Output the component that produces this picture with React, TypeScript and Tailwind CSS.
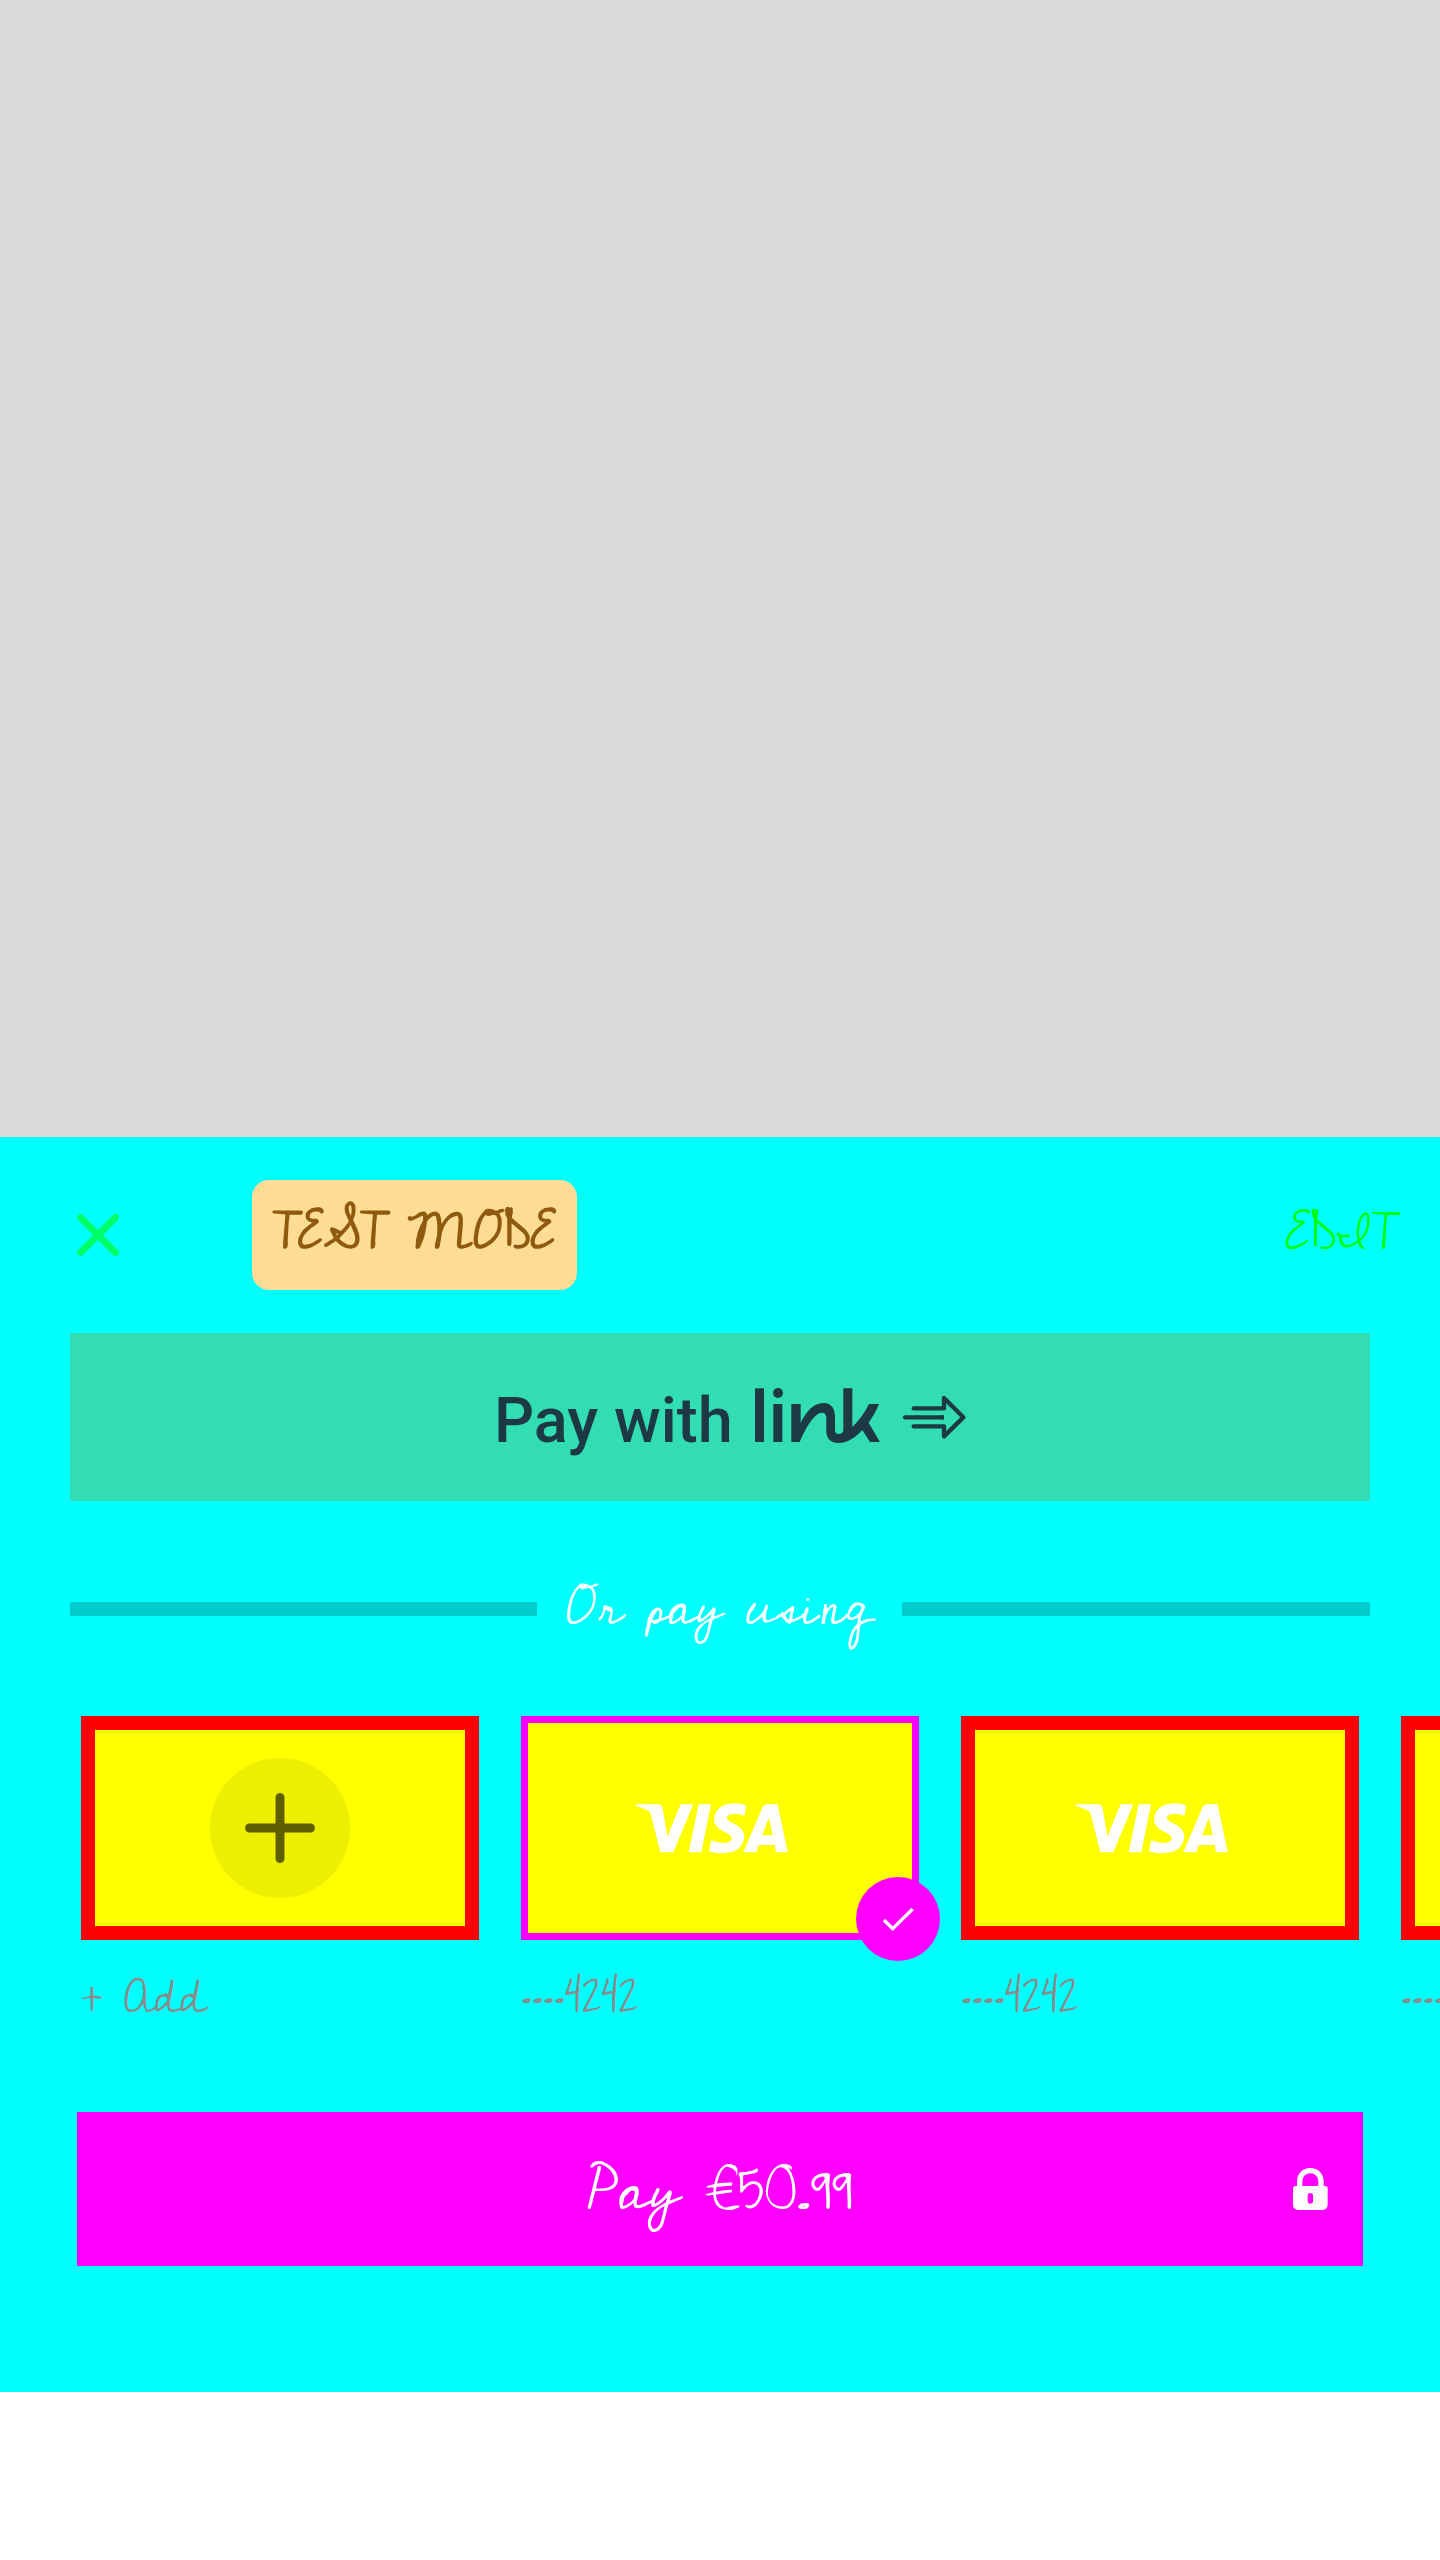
function CloseIcon() {
  return (
    <svg className="ml-[77px] h-[42px] w-[42px] shrink-0" viewBox="0 0 42 42" fill="none" stroke="#00ff66" strokeWidth="7" strokeLinecap="round">
      <path d="M3.5 3.5 38.5 38.5M38.5 3.5 3.5 38.5" />
    </svg>
  );
}

function LinkLogo() {
  return (
    <svg className="mb-[2px] h-[64px] w-[136px] shrink-0" viewBox="0 0 408 192" fill="#1d3944" role="img" aria-label="link">
      <path d="M15 13H42V174H15Z" />
      <circle cx="84" cy="27" r="15" />
      <path d="M70 60H97V174H70Z" />
      <path d="M124 60H152V116C170 82 190 57 220 57C246 57 255 76 255 99V138C255 147 260 150 266 150C274 150 280 146 280 138V13H307V129C325 111 344 87 357 60H387C379 80 368 99 356 116L390 174H360L337 138C316 161 292 177 266 177C241 177 229 162 229 140V103C229 92 225 86 216 86C196 86 171 122 149 174H124Z" />
    </svg>
  );
}

function LinkArrow() {
  return (
    <svg className="mt-[2px] ml-[10px] h-[60px] w-[76px] shrink-0" viewBox="0 0 228 180" fill="none" stroke="#1d3944" strokeWidth="13" strokeLinecap="round" strokeLinejoin="round">
      <path d="M53 61H144V30L202 88L144 145V115H53" />
      <path d="M27 88H138" />
      <path d="M134 88H144" strokeLinecap="butt" />
    </svg>
  );
}

function VisaLogo() {
  return (
    <svg className="h-[51px] w-[153px]" viewBox="376 308 459 153" fill="#fff" role="img" aria-label="Visa">
      <path d="M379 312H446Q457 313 459 324L473 409L513 312H551L491 456H452L423 340Q421 333 412 329Q395 321 379 317Z" />
      <path d="M567 312H604L575 456H537Z" />
      <path d="M710 316L704 346Q690 340 675 340Q652 341 652 352Q652 360 667 367Q704 383 704 408Q700 457 640 459Q615 459 598 452L605 419Q622 428 645 428Q666 427 666 413Q665 404 645 395Q613 381 613 357Q618 311 675 309Q694 309 710 316Z" />
      <path fillRule="evenodd" d="M772 312H804L834 456H799L795 434H747L740 456H701L759 320Q763 312 772 312ZM778 352L757 405H789Z" />
    </svg>
  );
}

function PlusBadge() {
  return (
    <div className="flex h-[140px] w-[140px] items-center justify-center rounded-full bg-[#eeee00]">
      <svg className="h-[70px] w-[70px]" viewBox="0 0 70 70" fill="none" stroke="#5f5f00" strokeWidth="9" strokeLinecap="round">
        <path d="M35 4.5V65.5M4.5 35H65.5" />
      </svg>
    </div>
  );
}

function SelectedBadge() {
  return (
    <div className="absolute -right-[28px] -bottom-[28px] flex h-[84px] w-[84px] items-center justify-center rounded-full bg-[#ff00ff]">
      <svg className="h-[84px] w-[84px]" viewBox="0 0 252 252" fill="none" stroke="#fff" strokeWidth="10">
        <path d="M84 129L110 155L170 96" />
      </svg>
    </div>
  );
}

function LockIcon() {
  return (
    <svg className="absolute right-[35px] h-[42px] w-[35px]" viewBox="0 0 105 126" fill="none">
      <path d="M20 60V40C20 21 34 8 52 8C70 8 84 21 84 40V60" stroke="#fff" strokeWidth="16" />
      <path fillRule="evenodd" fill="#fff" d="M8 54H97Q104 54 104 62V109Q104 126 88 126H16Q0 126 0 109V62Q0 54 8 54ZM44 83V99Q44 107 52 107Q60 107 60 99V83Q60 75 52 75Q44 75 44 83Z" />
    </svg>
  );
}

type Method = { id: number; kind: "add" | "visa"; label: string; selected?: boolean };

const methods: Method[] = [
  { id: 1, kind: "add", label: "+ Add" },
  { id: 2, kind: "visa", label: "····4242", selected: true },
  { id: 3, kind: "visa", label: "····4242" },
  { id: 4, kind: "visa", label: "····4242" },
];

function MethodCard({ method }: { method: Method }) {
  return (
    <div className="w-[398px] shrink-0">
      <div
        className={
          method.selected
            ? "relative flex h-[224px] items-center justify-center border-[7px] border-[#ff00ff] bg-[#ffff00]"
            : "relative flex h-[224px] items-center justify-center border-[14px] border-[#ff0000] bg-[#ffff00]"
        }
      >
        {method.kind === "add" ? (
          <PlusBadge />
        ) : (
          <div className="-ml-[17px]">
            <VisaLogo />
          </div>
        )}
        {method.selected && <SelectedBadge />}
      </div>
      <div
        className={
          method.kind === "visa"
            ? "mt-[24px] text-[45.5px] leading-normal tracking-[0.35px] whitespace-nowrap text-[#8b8b8b]"
            : "mt-[24px] text-[45.5px] leading-normal whitespace-nowrap text-[#8b8b8b]"
        }
      >
        {method.label}
      </div>
    </div>
  );
}

export default function App() {
  return (
    <div className="flex h-[2560px] w-[1440px] flex-col overflow-hidden bg-white font-['Cedarville_Cursive','Dancing_Script',cursive]">
      <div className="h-[1137px] shrink-0 bg-[#d9d9d9]" />
      <main className="flex h-[1255px] shrink-0 flex-col bg-[#00ffff]">
        <header className="flex h-[196px] shrink-0 items-center">
          <CloseIcon />
          <div className="ml-[133px] flex h-[110px] w-[325px] items-center justify-center rounded-[17px] bg-[#ffdd94]">
            <span className="mb-[2px] text-[49px] leading-normal font-bold whitespace-nowrap text-[#8f5a10]">TEST MODE</span>
          </div>
          <span className="mr-[44px] ml-auto text-[49px] leading-normal text-[#00ff00]">EDIT</span>
        </header>

        <button className="mx-[70px] flex h-[168px] shrink-0 items-center bg-[#33ddb3] pl-[424px]">
          <span className="mt-1.5 w-[256px] text-left font-['Roboto'] text-[63px] leading-none font-medium whitespace-nowrap text-[#1d3944]">
            Pay with
          </span>
          <LinkLogo />
          <LinkArrow />
        </button>

        <div className="mx-[70px] flex h-[215px] shrink-0 items-center">
          <div className="h-[14px] w-[467px] bg-[#00cccc]" />
          <span className="flex-1 pr-px text-center text-[52.5px] leading-normal whitespace-nowrap text-white">Or pay using</span>
          <div className="h-[14px] w-[468px] bg-[#00cccc]" />
        </div>

        <div className="flex h-[396px] shrink-0 gap-[42px] overflow-hidden pl-[81px]">
          {methods.map((m) => (
            <MethodCard key={m.id} method={m} />
          ))}
        </div>

        <button className="relative mx-[77px] flex h-[154px] shrink-0 items-center justify-center bg-[#ff00ff] text-[59.5px] leading-normal text-white">
          <span className="mt-1.5 tracking-[-0.35px]">Pay €50.99</span>
          <LockIcon />
        </button>
      </main>
    </div>
  );
}
